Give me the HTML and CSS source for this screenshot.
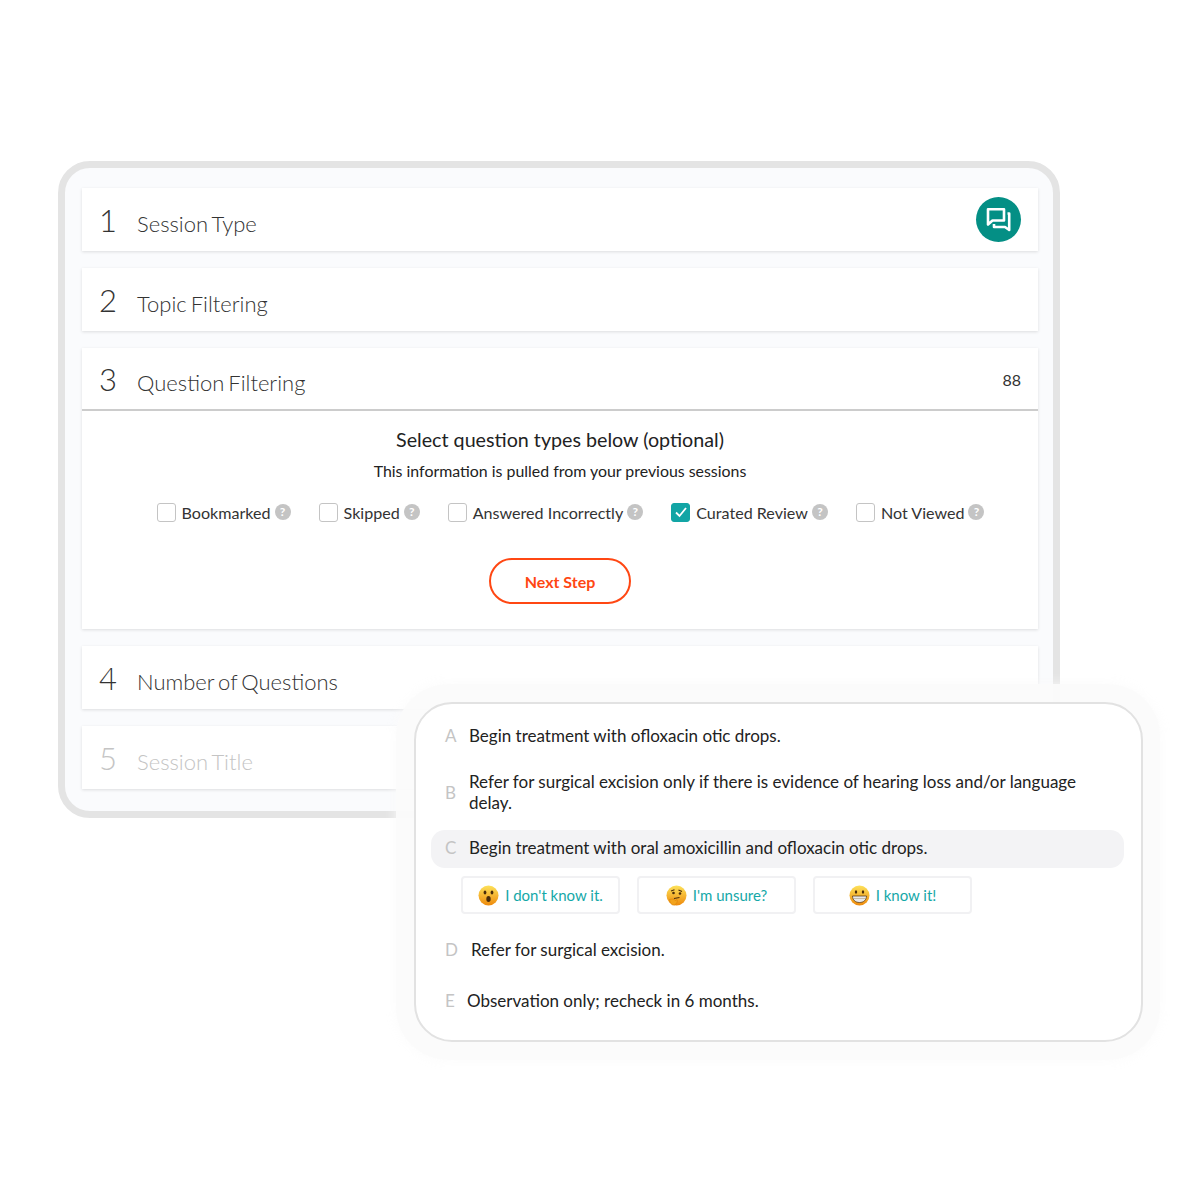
FILE: index.html
```html
<!DOCTYPE html>
<html>
<head>
    <title>Session Builder</title>
    <link rel="stylesheet" href="styles.css">
</head>
<body>
    <div class="frame">
        <div class="step">
            <div class="step-head">
                <span class="step-num">1</span>
                <span class="step-title">Session Type</span>
                <span class="chat-badge">
                    <svg width="28" height="28" viewBox="0 0 28 28" fill="none" stroke="#fff" stroke-width="2.6" stroke-linejoin="round">
                        <path d="M3 3.3H19V14.5H7.5L3 18.5Z"/>
                        <path d="M22.5 7.5H24.2V24L20 21H9V18"/>
                    </svg>
                </span>
            </div>
        </div>
        <div class="step">
            <div class="step-head">
                <span class="step-num">2</span>
                <span class="step-title">Topic Filtering</span>
            </div>
        </div>
        <div class="step">
            <div class="step-head step-head-open">
                <span class="step-num">3</span>
                <span class="step-title">Question Filtering</span>
                <span class="step-count">88</span>
            </div>
            <div class="step-body">
                <div class="body-title">Select question types below (optional)</div>
                <div class="body-sub">This information is pulled from your previous sessions</div>
                <div class="filters">
                    <div class="filter"><span class="check"></span>Bookmarked<span class="help">?</span></div>
                    <div class="filter"><span class="check"></span>Skipped<span class="help">?</span></div>
                    <div class="filter"><span class="check"></span>Answered Incorrectly<span class="help">?</span></div>
                    <div class="filter">
                        <span class="check check-on">
                            <svg width="14" height="12" viewBox="0 0 14 12" fill="none" stroke="#fff" stroke-width="1.8"><path d="M2 6.5L5.5 10L12 2"/></svg>
                        </span>Curated Review<span class="help">?</span>
                    </div>
                    <div class="filter"><span class="check"></span>Not Viewed<span class="help">?</span></div>
                </div>
                <button class="next-btn">Next Step</button>
            </div>
        </div>
        <div class="step">
            <div class="step-head">
                <span class="step-num">4</span>
                <span class="step-title">Number of Questions</span>
            </div>
        </div>
        <div class="step step-off">
            <div class="step-head">
                <span class="step-num">5</span>
                <span class="step-title">Session Title</span>
            </div>
        </div>
    </div>

    <div class="quiz-halo">
        <div class="quiz">
            <div class="answer answer-a"><span class="letter">A</span>Begin treatment with ofloxacin otic drops.</div>
            <div class="answer answer-b"><span class="letter">B</span><span>Refer for surgical excision only if there is evidence of hearing loss and/or language delay.</span></div>
            <div class="answer answer-c"><span class="letter">C</span>Begin treatment with oral amoxicillin and ofloxacin otic drops.</div>
            <div class="ratings">
                <button class="rating">
                    <svg class="emoji" width="21" height="21" viewBox="0 0 21 21">
                        <defs><linearGradient id="face" x1="0" y1="0" x2="0" y2="1"><stop offset="0" stop-color="#fde25a"/><stop offset="1" stop-color="#ee8a0c"/></linearGradient></defs>
                        <circle cx="10.5" cy="10.5" r="10" fill="url(#face)"/>
                        <ellipse cx="7" cy="7.5" rx="1.4" ry="1.9" fill="#4a2c0a"/>
                        <ellipse cx="14" cy="7.5" rx="1.4" ry="1.9" fill="#4a2c0a"/>
                        <ellipse cx="10.5" cy="14" rx="2.2" ry="3" fill="#4a2c0a"/>
                    </svg>
                    I don't know it.
                </button>
                <button class="rating">
                    <svg class="emoji" width="21" height="21" viewBox="0 0 21 21">
                        <circle cx="10.5" cy="10.5" r="10" fill="url(#face)"/>
                        <path d="M5 6L8.5 4.8M12.5 5L16 6.5" stroke="#4a2c0a" stroke-width="1.1" fill="none"/>
                        <circle cx="7.5" cy="8" r="1.3" fill="#4a2c0a"/>
                        <circle cx="14" cy="8.5" r="1.3" fill="#4a2c0a"/>
                        <path d="M8 13.5L13.5 12.5" stroke="#4a2c0a" stroke-width="1.2"/>
                        <path d="M3.5 14.5C6 13.5 8 14 9.5 15.5L11 14.5C12 15.5 11 19 8.5 20C5.5 20.5 4 18 3.5 14.5Z" fill="#f2a31c" stroke="#d97f0c" stroke-width=".6"/>
                    </svg>
                    I'm unsure?
                </button>
                <button class="rating">
                    <svg class="emoji" width="21" height="21" viewBox="0 0 21 21">
                        <circle cx="10.5" cy="10.5" r="10" fill="url(#face)"/>
                        <ellipse cx="7" cy="7" rx="1.2" ry="1.7" fill="#4a2c0a"/>
                        <ellipse cx="14" cy="7" rx="1.2" ry="1.7" fill="#4a2c0a"/>
                        <path d="M3.5 11H17.5C17.5 15 14.5 17.5 10.5 17.5C6.5 17.5 3.5 15 3.5 11Z" fill="#e9e9e9" stroke="#4a2c0a" stroke-width=".7"/>
                        <path d="M3.8 13.5H17.2" stroke="#a89a80" stroke-width=".6"/>
                    </svg>
                    I know it!
                </button>
            </div>
            <div class="answer answer-d"><span class="letter">D</span>Refer for surgical excision.</div>
            <div class="answer answer-e"><span class="letter">E</span>Observation only; recheck in 6 months.</div>
        </div>
    </div>
</body>
</html>
```

FILE: styles.css
```css
body {
    margin: 0;
    height: 1200px;
    background-color: #fff;
    font-family: "Lato", "Liberation Sans", sans-serif;
    color: #222;
    position: relative;
    overflow: hidden;
}

.frame {
    box-sizing: border-box;
    width: 1002px;
    height: 657px;
    margin: 161px 0 0 58px;
    padding: 20px 15px 0 17px;
    background-color: #fafbfd;
    border: 7px solid #e4e4e4;
    border-radius: 32px;
    display: flex;
    flex-direction: column;
    gap: 17px;
}

.step {
    background-color: #fff;
    box-shadow: 0 1px 3px rgba(0, 0, 0, 0.12);
}

.step-head {
    height: 63px;
    box-sizing: border-box;
    padding: 0 17px 0 17px;
    display: flex;
    align-items: center;
    position: relative;
}

.step-head-open {
    border-bottom: 2px solid #ccc;
}

.step-num {
    width: 38px;
    font-size: 31px;
    font-weight: 300;
    color: #333;
}

.step-title {
    margin-top: 7px;
    font-size: 22px;
    font-weight: 300;
    word-spacing: -2px;
    color: #333;
}

.step-off .step-num,
.step-off .step-title {
    color: #c4c4c4;
}

.step-count {
    margin-left: auto;
    margin-top: 2px;
    font-size: 16px;
    color: #333;
}

.chat-badge {
    position: absolute;
    right: 17px;
    top: 9px;
    width: 45px;
    height: 45px;
    border-radius: 50%;
    background-color: #048f85;
    display: flex;
    align-items: center;
    justify-content: center;
}

.step-body {
    height: 218px;
    box-sizing: border-box;
    padding-top: 17px;
    display: flex;
    flex-direction: column;
    align-items: center;
}

.body-title {
    font-size: 19.7px;
    line-height: 24px;
    color: #222;
}

.body-sub {
    margin-top: 9px;
    font-size: 15.9px;
    line-height: 20px;
    color: #222;
}

.filters {
    margin: 21px 0 0 21px;
    display: flex;
    gap: 28px;
}

.filter {
    display: flex;
    align-items: center;
    height: 20px;
    font-size: 16.1px;
    color: #333;
}

.check {
    box-sizing: border-box;
    width: 19px;
    height: 19px;
    margin-right: 6px;
    border: 1px solid #c4c4c4;
    border-radius: 3px;
    display: flex;
    align-items: center;
    justify-content: center;
}

.check-on {
    background-color: #12a5a5;
    border-color: #12a5a5;
}

.help {
    width: 16px;
    height: 16px;
    margin-left: 4px;
    border-radius: 50%;
    background-color: #c4c4c4;
    color: #fff;
    font-size: 12px;
    font-weight: 700;
    text-align: center;
    line-height: 16px;
}

.next-btn {
    margin-top: 36px;
    width: 142px;
    height: 46px;
    background-color: #fff;
    border: 2px solid #ff4713;
    border-radius: 23px;
    color: #ff4713;
    font-family: inherit;
    font-size: 16px;
    font-weight: 700;
}

.quiz-halo {
    position: absolute;
    left: 396px;
    top: 684px;
    width: 764px;
    height: 376px;
    box-sizing: border-box;
    padding: 18px 17px 18px 18px;
    background-color: rgba(251, 251, 251, 0.95);
    border-radius: 52px;
    box-shadow: 0 0 12px rgba(251, 251, 251, 0.9);
}

.quiz {
    box-sizing: border-box;
    height: 340px;
    background-color: #fff;
    border: 2px solid #e2e2e2;
    border-radius: 38px;
    padding: 13px 17px 0 15px;
}

.answer {
    box-sizing: border-box;
    display: flex;
    align-items: center;
    font-size: 17px;
    line-height: 21px;
    color: #222;
    padding-left: 14px;
}

.letter {
    width: 24px;
    flex-shrink: 0;
    font-size: 17px;
    color: #c4c4c4;
}

.answer-a {
    height: 38px;
    padding-bottom: 1px;
}

.answer-b {
    margin-top: 14px;
    height: 46px;
    padding-right: 40px;
}

.answer-c {
    margin-top: 15px;
    height: 38px;
    padding-bottom: 3px;
    background-color: #f3f3f5;
    border-radius: 14px;
}

.answer-d {
    margin-top: 16px;
    height: 38px;
}

.answer-e {
    margin-top: 13px;
    height: 38px;
}

.answer-d .letter {
    width: 26px;
}

.answer-e .letter {
    width: 22px;
}

.ratings {
    margin: 8px 0 0 30px;
    display: flex;
    gap: 17px;
}

.rating {
    width: 159px;
    height: 38px;
    background-color: #fff;
    border: 2px solid #f1f1f3;
    border-radius: 4px;
    color: #15a8a8;
    font-family: inherit;
    font-size: 15px;
    display: flex;
    align-items: center;
    justify-content: center;
    padding: 0;
}

.emoji {
    margin-right: 6px;
}
```
